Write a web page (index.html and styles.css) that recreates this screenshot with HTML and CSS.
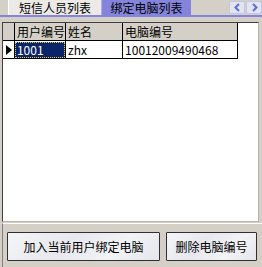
FILE: index.html
```html
<!DOCTYPE html>
<html lang="zh">
<head>
    <meta charset="UTF-8">
    <title>绑定电脑列表</title>
    <link rel="stylesheet" href="styles.css">
</head>
<body>

<div class="tabbar">
    <div class="tab-gap"></div>
    <div class="tab">短信人员列表</div>
    <div class="tab aktif">绑定电脑列表</div>
    <div class="tab-sisa"></div>
    <div class="nav">
        <button class="nav-btn">
            <svg width="9" height="9" viewBox="0 0 9 9"><path d="M6 1 L2.5 4.5 L6 8" fill="none" stroke="#5a6fd6" stroke-width="2"/></svg>
        </button>
        <button class="nav-btn">
            <svg width="9" height="9" viewBox="0 0 9 9"><path d="M3 1 L6.5 4.5 L3 8" fill="none" stroke="#5a6fd6" stroke-width="2"/></svg>
        </button>
    </div>
</div>

<div class="grid-box">
    <table class="grid">
        <tr class="head">
            <td class="ind"></td>
            <td class="c1">用户编号</td>
            <td class="c2">姓名</td>
            <td class="c3">电脑编号</td>
            <td class="kosong"></td>
        </tr>
        <tr class="row">
            <td class="ind"><span class="panah"></span></td>
            <td class="c1"><span class="pilih">1001</span></td>
            <td class="c2">zhx</td>
            <td class="c3">10012009490468</td>
            <td class="kosong"></td>
        </tr>
    </table>
</div>

<div class="aksi">
    <button class="btn lebar">加入当前用户绑定电脑</button>
    <button class="btn">删除电脑编号</button>
</div>

</body>
</html>
```

FILE: styles.css
```css
body {
    margin: 0;
    background: #d4d0c8;
    font-family: "Noto Sans CJK SC", "DejaVu Sans", sans-serif;
    font-size: 12px;
    width: 262px;
    height: 267px;
    overflow: hidden;
}
.tabbar {
    display: flex;
    height: 15px;
    border-bottom: 2px solid #8484dc;
}
.tab-gap {
    width: 8px;
}
.tab {
    width: 92px;
    background: #ebeae6;
    border-left: 1px solid #ffffff;
    text-align: center;
    line-height: 15px;
    color: #000;
}
.tab.aktif {
    width: 89px;
    background: #8484dc;
    border-left: 1px solid #b0b0ee;
}
.tab-sisa {
    flex: 1;
}
.nav {
    display: flex;
    gap: 1px;
    padding-top: 1px;
}
.nav-btn {
    width: 16px;
    height: 13px;
    padding: 0;
    margin: 0;
    border: 1px solid #c3c7e6;
    border-radius: 2px;
    background: #e2e4f2;
    display: flex;
    align-items: center;
    justify-content: center;
}
.grid-box {
    margin: 5px 3px 0 2px;
    height: 198px;
    background: #ffffff;
    border-top: 1px solid #404040;
    border-left: 1px solid #404040;
    border-right: 1px solid #b8b4ac;
    border-bottom: 1px solid #b8b4ac;
}
.grid {
    border-collapse: collapse;
}
.grid td {
    padding: 0 0 0 2px;
    height: 16px;
    border: 1px solid #000;
    white-space: nowrap;
}
.grid .head td {
    background: #d4d0c8;
    border-top: none;
}
.grid td.kosong {
    border: none;
    background: #fff;
    width: 18px;
}
.grid td.ind {
    width: 11px;
    border-left: none;
    padding: 0;
}
.c1 { width: 47px; }
.c2 { width: 55px; }
.c3 { width: 113px; }
.grid .row .c1 {
    padding: 0;
}
.pilih {
    display: block;
    background: #0a246a;
    color: #ffffff;
    padding-left: 2px;
    outline: 1px dotted #e8d048;
    outline-offset: -1px;
    line-height: 16px;
}
.panah {
    display: block;
    width: 0;
    height: 0;
    margin-left: 3px;
    border-top: 5px solid transparent;
    border-bottom: 5px solid transparent;
    border-left: 6px solid #000;
}
.aksi {
    display: flex;
    gap: 6px;
    margin: 1px 0 0 2px;
    padding: 8px 5px 0 4px;
    height: 37px;
    border-top: 1px solid #ffffff;
    border-left: 1px solid #808080;
    border-bottom: 1px solid #f4f2ee;
}
.btn {
    height: 29px;
    width: 91px;
    font-family: "Noto Sans CJK SC", sans-serif;
    font-size: 12px;
    color: #000;
    border: 1px solid #303030;
    border-radius: 1px;
    background: linear-gradient(135deg, #f4f5f8 0%, #e6e8ee 40%, #f2f3f6 70%, #e4e6ec 100%);
    padding: 0;
}
.btn.lebar {
    width: 153px;
}
```
